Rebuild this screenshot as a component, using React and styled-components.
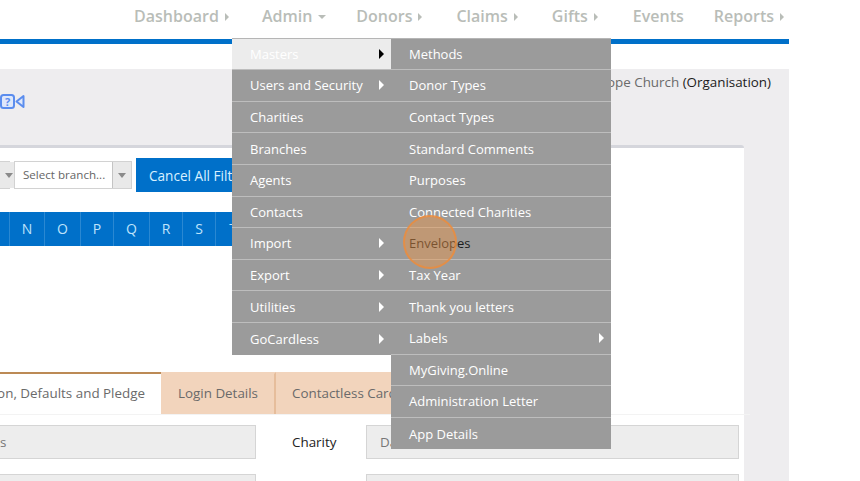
import React from "react";
import styled, { createGlobalStyle } from "styled-components";

const Global = createGlobalStyle`
  html, body { margin: 0; padding: 0; background: #fff; }
  body { font-family: "Open Sans", sans-serif; font-size: 13px; color: #555; }
`;

const Viewport = styled.div`
  position: relative;
  width: 860px;
  height: 481px;
  overflow: hidden;
`;

const Shell = styled.div`
  width: 789px;
  height: 481px;
  display: flex;
  flex-direction: column;
  overflow: hidden;
`;

const TopNav = styled.nav`
  height: 39px;
  flex: none;
  display: flex;
  justify-content: flex-end;
  align-items: flex-start;
  padding: 5px 5px 0 0;
  box-sizing: border-box;
  gap: 34px;
`;

const NavItem = styled.div`
  display: flex;
  align-items: center;
  gap: 6px;
  font-size: 16px;
  line-height: 22px;
  font-weight: 600;
  color: #b9bdb8;
  margin-right: ${(p) => p.$pull || 0}px;
`;

const BlueRule = styled.div`
  height: 5px;
  flex: none;
  background: #0070c9;
`;

const WhiteStrip = styled.div`
  height: 25px;
  flex: none;
`;

const Body = styled.div`
  flex: 1;
  background: #eeedef;
  padding-right: 45px;
  display: flex;
  flex-direction: column;
`;

const TitleBand = styled.div`
  height: 76px;
  flex: none;
  display: flex;
  justify-content: space-between;
  align-items: flex-start;
  margin-right: -27px;
`;

const HelpIcon = styled.svg`
  width: 25px;
  height: 15px;
  margin-top: 25px;
`;

const OrgName = styled.div`
  font-size: 13.4px;
  line-height: 20px;
  margin-top: 3px;
  color: #6a6a6a;
  span { color: #1c1c1c; }
`;

const Panel = styled.div`
  flex: 1;
  background: #fff;
  border-top: 3px solid #d5d6dc;
  border-top-right-radius: 3px;
  display: flex;
  flex-direction: column;
`;

const FilterRow = styled.div`
  height: 64px;
  flex: none;
  display: flex;
  align-items: flex-start;
  padding-top: 10px;
  box-sizing: border-box;
`;

const SelectBox = styled.div`
  width: ${(p) => p.$width}px;
  height: 28px;
  margin: 3px 4px 0 0;
  flex: none;
  box-sizing: border-box;
  display: flex;
  border: 1px solid #d2d2d2;
  border-left-width: ${(p) => (p.$cut ? 0 : 1)}px;
  background: #fff;
  font-size: 11.6px;
  line-height: 26px;
  color: #666;
`;

const SelectText = styled.div`
  flex: 1;
  padding-left: 8px;
  white-space: nowrap;
  overflow: hidden;
`;

const SelectArrow = styled.div`
  width: 18px;
  flex: none;
  display: flex;
  align-items: center;
  justify-content: center;
  background: #e9e9e9;
  border-left: ${(p) => (p.$cut ? 0 : 1)}px solid #c4c4c4;
  &::after {
    content: "";
    border-left: 4px solid transparent;
    border-right: 4px solid transparent;
    border-top: 5px solid #8a8a8a;
  }
`;

const CancelButton = styled.button`
  height: 34px;
  width: 180px;
  margin: 0;
  flex: none;
  border: 0;
  background: #0070c9;
  color: #d8f0ff;
  font-family: inherit;
  font-size: 13.6px;
  text-align: left;
  padding: 0 0 0 13px;
`;

const AlphaBar = styled.div`
  height: 34px;
  width: 300px;
  flex: none;
  display: flex;
  background: #0070c9;
  padding-left: 9px;
  box-sizing: border-box;
`;

const AlphaLetter = styled.div`
  width: ${(p) => p.$width}px;
  flex: none;
  box-sizing: border-box;
  border-left: 1px solid #2a88d2;
  text-align: center;
  color: #bfe3fb;
  font-size: 14px;
  line-height: 34px;
`;

const TabRow = styled.div`
  margin-top: 126px;
  height: 42px;
  flex: none;
  display: flex;
  border-bottom: 1px solid #f3f3f3;
  width: 750px;
`;

const Tab = styled.div`
  height: 42px;
  flex: none;
  width: ${(p) => p.$width}px;
  box-sizing: border-box;
  display: flex;
  align-items: center;
  white-space: nowrap;
  font-size: 13.4px;
  justify-content: ${(p) => (p.$active ? "flex-end" : "flex-start")};
  padding: ${(p) => (p.$active ? "0 16px 3px 0" : `0 0 3px ${p.$inset}px`)};
  background: ${(p) => (p.$active ? "#fff" : "#f2d4bc")};
  border-top: 2px solid ${(p) => (p.$active ? "#bc8a55" : "#f2d4bc")};
  border-right: ${(p) => (p.$sep ? "2px solid #e6bd9b" : "0")};
  color: #6a6a6a;
  overflow: hidden;
`;

const FieldRow = styled.div`
  display: flex;
  align-items: center;
  height: 34px;
  margin-top: ${(p) => p.$top}px;
  flex: none;
  width: 739px;
`;

const FieldBox = styled.div`
  height: 34px;
  box-sizing: border-box;
  width: ${(p) => p.$width}px;
  flex: none;
  background: #ededed;
  border: 1px solid #d5d5d5;
  border-left-width: ${(p) => (p.$cut ? 0 : 1)}px;
  padding-left: ${(p) => (p.$cut ? 0 : 13)}px;
  font-size: 13.4px;
  line-height: 32px;
  color: #777;
`;

const FieldLabel = styled.div`
  width: 110px;
  padding-left: 36px;
  box-sizing: border-box;
  flex: none;
  font-size: 13.4px;
  color: #222;
`;

const Menu = styled.div`
  position: absolute;
  left: 232px;
  top: 37.6px;
  display: flex;
  align-items: flex-start;
  border-top: 1px solid #b5b5b5;
`;

const MenuColumn = styled.ul`
  list-style: none;
  margin: 0;
  padding: 0;
  width: ${(p) => p.$width}px;
  background: #9b9b9b;
`;

const MenuRow = styled.li`
  height: 31.6px;
  box-sizing: border-box;
  display: flex;
  align-items: center;
  justify-content: space-between;
  padding: 0 7px 0 18px;
  font-size: 13px;
  color: ${(p) => (p.$dark ? "#1d1d1d" : "#fff")};
  background: ${(p) => (p.$selected ? "#ececec" : "transparent")};
  border-bottom: ${(p) => (p.$last ? "0" : "1px solid #bdbdbd")};
  white-space: nowrap;
`;

const MenuArrow = styled.span`
  width: 0;
  height: 0;
  border-top: 5px solid transparent;
  border-bottom: 5px solid transparent;
  border-left: 5px solid ${(p) => (p.$dark ? "#000" : "#fff")};
`;

const CursorHalo = styled.div`
  position: absolute;
  left: 403px;
  top: 215px;
  width: 54px;
  height: 54px;
  box-sizing: border-box;
  border-radius: 50%;
  background: rgba(236, 148, 72, 0.45);
  border: 2px solid rgba(236, 140, 60, 0.8);
`;

const NavCaret = styled.span`
  width: 0;
  height: 0;
  ${(p) =>
    p.$down
      ? `border-left: 4px solid transparent;
         border-right: 4px solid transparent;
         border-top: 4px solid #b9bdb8;`
      : `border-top: 4px solid transparent;
         border-bottom: 4px solid transparent;
         border-left: 4px solid #b9bdb8;`}
  margin-top: 2px;
`;

const navItems = [
  { label: "Dashboard", caret: "right", pull: -1 },
  { label: "Admin", caret: "down", pull: -4 },
  { label: "Donors", caret: "right" },
  { label: "Claims", caret: "right" },
  { label: "Gifts", caret: "right", pull: 1 },
  { label: "Events", pull: -4 },
  { label: "Reports", caret: "right" },
];

const letters = [
  ["N", 35], ["O", 36], ["P", 33], ["Q", 36], ["R", 33], ["S", 33], ["T", 35],
];

const masters = [
  { label: "Masters", arrow: true, selected: true },
  { label: "Users and Security", arrow: true },
  { label: "Charities" },
  { label: "Branches" },
  { label: "Agents" },
  { label: "Contacts" },
  { label: "Import", arrow: true },
  { label: "Export", arrow: true },
  { label: "Utilities", arrow: true },
  { label: "GoCardless", arrow: true },
];

const subItems = [
  { label: "Methods" },
  { label: "Donor Types" },
  { label: "Contact Types" },
  { label: "Standard Comments" },
  { label: "Purposes" },
  { label: "Connected Charities" },
  { label: "Envelopes", dark: true },
  { label: "Tax Year" },
  { label: "Thank you letters" },
  { label: "Labels", arrow: true },
  { label: "MyGiving.Online" },
  { label: "Administration Letter" },
  { label: "App Details" },
];

const App = () => {
  return (
    <Viewport>
      <Global />
      <Shell>
        <TopNav>
          {navItems.map((item) => (
            <NavItem key={item.label} $pull={item.pull}>
              {item.label}
              {item.caret && <NavCaret $down={item.caret === "down"} />}
            </NavItem>
          ))}
        </TopNav>
        <BlueRule />
        <WhiteStrip />
        <Body>
          <TitleBand>
            <HelpIcon viewBox="0 0 25 15">
              <rect x="1" y="1" width="13" height="13" rx="2.5" fill="#dfe8fb" stroke="#5b8dee" strokeWidth="2" />
              <text x="7.5" y="11.5" fontFamily="Open Sans" fontSize="11" fontWeight="700" fill="#5b8dee" textAnchor="middle">?</text>
              <path d="M16.5 7.5 L23.5 2 V13 Z" fill="#dfe8fb" stroke="#5b8dee" strokeWidth="2" strokeLinejoin="round" />
            </HelpIcon>
            <OrgName>
              Hope Church <span>(Organisation)</span>
            </OrgName>
          </TitleBand>
          <Panel>
            <FilterRow>
              <SelectBox $width={10} $cut>
                <SelectArrow $cut />
              </SelectBox>
              <SelectBox $width={118}>
                <SelectText>Select branch...</SelectText>
                <SelectArrow />
              </SelectBox>
              <CancelButton>Cancel All Filters</CancelButton>
            </FilterRow>
            <AlphaBar>
              {letters.map(([letter, width]) => (
                <AlphaLetter key={letter} $width={width}>{letter}</AlphaLetter>
              ))}
            </AlphaBar>
            <TabRow>
              <Tab $active $width={161}>Declaration, Defaults and Pledge</Tab>
              <Tab $width={115} $inset={17} $sep>Login Details</Tab>
              <Tab $width={200} $inset={16}>Contactless Card</Tab>
            </TabRow>
            <FieldRow $top={10}>
              <FieldBox $cut $width={256}>s</FieldBox>
              <FieldLabel>Charity</FieldLabel>
              <FieldBox $width={373}>Da</FieldBox>
            </FieldRow>
            <FieldRow $top={15}>
              <FieldBox $cut $width={256} />
              <FieldLabel />
              <FieldBox $width={373} />
            </FieldRow>
          </Panel>
        </Body>
      </Shell>

      <Menu>
        <MenuColumn $width={159}>
          {masters.map((item, i) => (
            <MenuRow key={item.label} $selected={item.selected} $last={i === masters.length - 1}>
              {item.label}
              {item.arrow && <MenuArrow $dark={item.selected} />}
            </MenuRow>
          ))}
        </MenuColumn>
        <MenuColumn $width={220}>
          {subItems.map((item, i) => (
            <MenuRow key={item.label} $dark={item.dark} $last={i === subItems.length - 1}>
              {item.label}
              {item.arrow && <MenuArrow />}
            </MenuRow>
          ))}
        </MenuColumn>
      </Menu>
      <CursorHalo />
    </Viewport>
  );
};

export default App;
